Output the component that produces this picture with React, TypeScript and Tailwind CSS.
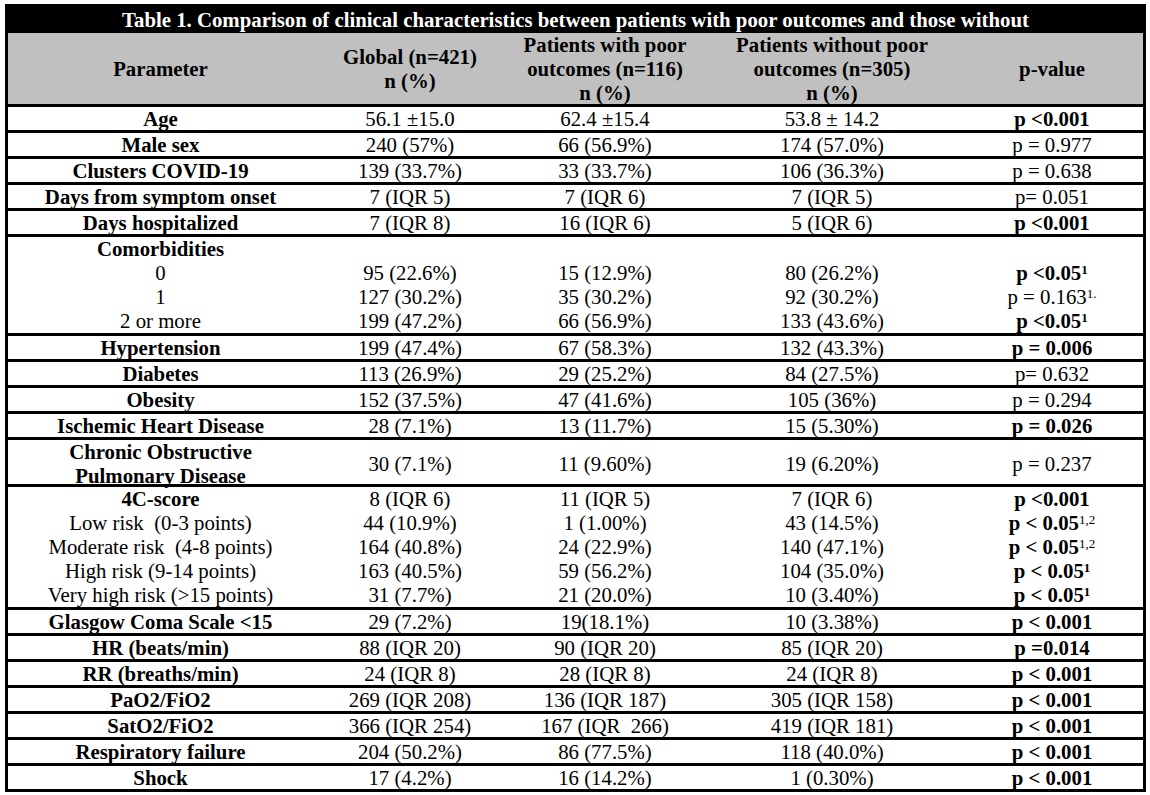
import React from "react";

type Cell = React.ReactNode;

const COLS = "grid grid-cols-[305px_194px_196px_258px_182px]";

const B = ({ children }: { children: React.ReactNode }) => <span className="font-bold">{children}</span>;
const Sup = ({ children, bold }: { children: React.ReactNode; bold?: boolean }) => (
  <sup className={`text-[13px] ${bold ? "font-bold" : "font-normal"}`}>{children}</sup>
);

function SingleRow({ param, g, p, w, pv }: { param: Cell; g: Cell; p: Cell; w: Cell; pv: Cell }) {
  return (
    <div className={`${COLS} h-[26px] items-center border-t-[3px] border-black leading-[23px]`}>
      <div className="text-center font-bold">{param}</div>
      <div className="text-center">{g}</div>
      <div className="text-center">{p}</div>
      <div className="text-center">{w}</div>
      <div className="text-center">{pv}</div>
    </div>
  );
}

function GroupRow({ lines, cls }: { lines: { param: Cell; bold?: boolean; g?: Cell; p?: Cell; w?: Cell; pv?: Cell }[]; cls?: string }) {
  return (
    <div className={`border-t-[3px] border-black ${cls ?? ""}`}>
      {lines.map((l, i) => (
        <div key={i} className={`${COLS} h-[24px] items-center leading-[24px]`}>
          <div className={`text-center ${l.bold ? "font-bold" : ""}`}>{l.param}</div>
          <div className="text-center">{l.g}</div>
          <div className="text-center">{l.p}</div>
          <div className="text-center">{l.w}</div>
          <div className="text-center">{l.pv}</div>
        </div>
      ))}
    </div>
  );
}

export default function App() {
  return (
    <div className="w-[1150px] h-[795px] bg-white pt-[4px] pl-[5px] font-[Liberation_Serif,serif] text-[20.8px] text-black">
      <div className="w-[1141px] border-[3px] border-black">
        {/* Title */}
        <div className="h-[26px] bg-black text-white font-bold text-center leading-[26px]">
          Table 1. Comparison of clinical characteristics between patients with poor outcomes and those without
        </div>
        {/* Header */}
        <div className={`${COLS} h-[71px] bg-[#c0c0c0] font-bold items-center leading-[24px]`}>
          <div className="text-center">Parameter</div>
          <div className="text-center">
            Global (n=421)
            <br />n (%)
          </div>
          <div className="text-center">
            Patients with poor
            <br />outcomes (n=116)
            <br />n (%)
          </div>
          <div className="text-center">
            Patients without poor
            <br />outcomes (n=305)
            <br />n (%)
          </div>
          <div className="text-center">p-value</div>
        </div>

        <SingleRow param="Age" g="56.1 ±15.0" p="62.4 ±15.4" w="53.8 ± 14.2" pv={<B>p &lt;0.001</B>} />
        <SingleRow param="Male sex" g="240 (57%)" p="66 (56.9%)" w="174 (57.0%)" pv="p = 0.977" />
        <SingleRow param="Clusters COVID-19" g="139 (33.7%)" p="33 (33.7%)" w="106 (36.3%)" pv="p = 0.638" />
        <SingleRow param="Days from symptom onset" g="7 (IQR 5)" p="7 (IQR 6)" w="7 (IQR 5)" pv="p= 0.051" />
        <SingleRow param="Days hospitalized" g="7 (IQR 8)" p="16 (IQR 6)" w="5 (IQR 6)" pv={<B>p &lt;0.001</B>} />

        <GroupRow
          lines={[
            { param: "Comorbidities", bold: true },
            {
              param: "0",
              g: "95 (22.6%)",
              p: "15 (12.9%)",
              w: "80 (26.2%)",
              pv: (
                <B>
                  p &lt;0.05<Sup bold>1</Sup>
                </B>
              ),
            },
            {
              param: "1",
              g: "127 (30.2%)",
              p: "35 (30.2%)",
              w: "92 (30.2%)",
              pv: (
                <span>
                  p = 0.163<Sup>1.</Sup>
                </span>
              ),
            },
            {
              param: "2 or more",
              g: "199 (47.2%)",
              p: "66 (56.9%)",
              w: "133 (43.6%)",
              pv: (
                <B>
                  p &lt;0.05<Sup bold>1</Sup>
                </B>
              ),
            },
          ]}
        />

        <SingleRow param="Hypertension" g="199 (47.4%)" p="67 (58.3%)" w="132 (43.3%)" pv={<B>p = 0.006</B>} />
        <SingleRow param="Diabetes" g="113 (26.9%)" p="29 (25.2%)" w="84 (27.5%)" pv="p= 0.632" />
        <SingleRow param="Obesity" g="152 (37.5%)" p="47 (41.6%)" w="105 (36%)" pv="p = 0.294" />
        <SingleRow param="Ischemic Heart Disease" g="28 (7.1%)" p="13 (11.7%)" w="15 (5.30%)" pv={<B>p = 0.026</B>} />

        <div className={`${COLS} h-[47px] items-center border-t-[3px] border-black leading-[24px]`}>
          <div className="text-center font-bold">
            Chronic Obstructive
            <br />
            Pulmonary Disease
          </div>
          <div className="text-center">30 (7.1%)</div>
          <div className="text-center">11 (9.60%)</div>
          <div className="text-center">19 (6.20%)</div>
          <div className="text-center">p = 0.237</div>
        </div>

        <GroupRow
          lines={[
            { param: "4C-score", bold: true, g: "8 (IQR 6)", p: "11 (IQR 5)", w: "7 (IQR 6)", pv: <B>p &lt;0.001</B> },
            {
              param: <span>Low risk&nbsp; (0-3 points)</span>,
              g: "44 (10.9%)",
              p: "1 (1.00%)",
              w: "43 (14.5%)",
              pv: (
                <B>
                  p &lt; 0.05<Sup>1,2</Sup>
                </B>
              ),
            },
            {
              param: <span>Moderate risk&nbsp; (4-8 points)</span>,
              g: "164 (40.8%)",
              p: "24 (22.9%)",
              w: "140 (47.1%)",
              pv: (
                <B>
                  p &lt; 0.05<Sup>1,2</Sup>
                </B>
              ),
            },
            {
              param: "High risk (9-14 points)",
              g: "163 (40.5%)",
              p: "59 (56.2%)",
              w: "104 (35.0%)",
              pv: (
                <B>
                  p &lt; 0.05<Sup bold>1</Sup>
                </B>
              ),
            },
            {
              param: "Very high risk (>15 points)",
              g: "31 (7.7%)",
              p: "21 (20.0%)",
              w: "10 (3.40%)",
              pv: (
                <B>
                  p &lt; 0.05<Sup bold>1</Sup>
                </B>
              ),
            },
          ]}
        />

        <SingleRow param="Glasgow Coma Scale <15" g="29 (7.2%)" p="19(18.1%)" w="10 (3.38%)" pv={<B>p &lt; 0.001</B>} />
        <SingleRow param="HR (beats/min)" g="88 (IQR 20)" p="90 (IQR 20)" w="85 (IQR 20)" pv={<B>p =0.014</B>} />
        <SingleRow param="RR (breaths/min)" g="24 (IQR 8)" p="28 (IQR 8)" w="24 (IQR 8)" pv={<B>p &lt; 0.001</B>} />
        <SingleRow param="PaO2/FiO2" g="269 (IQR 208)" p="136 (IQR 187)" w="305 (IQR 158)" pv={<B>p &lt; 0.001</B>} />
        <SingleRow param="SatO2/FiO2" g="366 (IQR 254)" p={<span>167 (IQR&nbsp; 266)</span>} w="419 (IQR 181)" pv={<B>p &lt; 0.001</B>} />
        <SingleRow param="Respiratory failure" g="204 (50.2%)" p="86 (77.5%)" w="118 (40.0%)" pv={<B>p &lt; 0.001</B>} />
        <SingleRow param="Shock" g="17 (4.2%)" p="16 (14.2%)" w="1 (0.30%)" pv={<B>p &lt; 0.001</B>} />
      </div>
    </div>
  );
}
